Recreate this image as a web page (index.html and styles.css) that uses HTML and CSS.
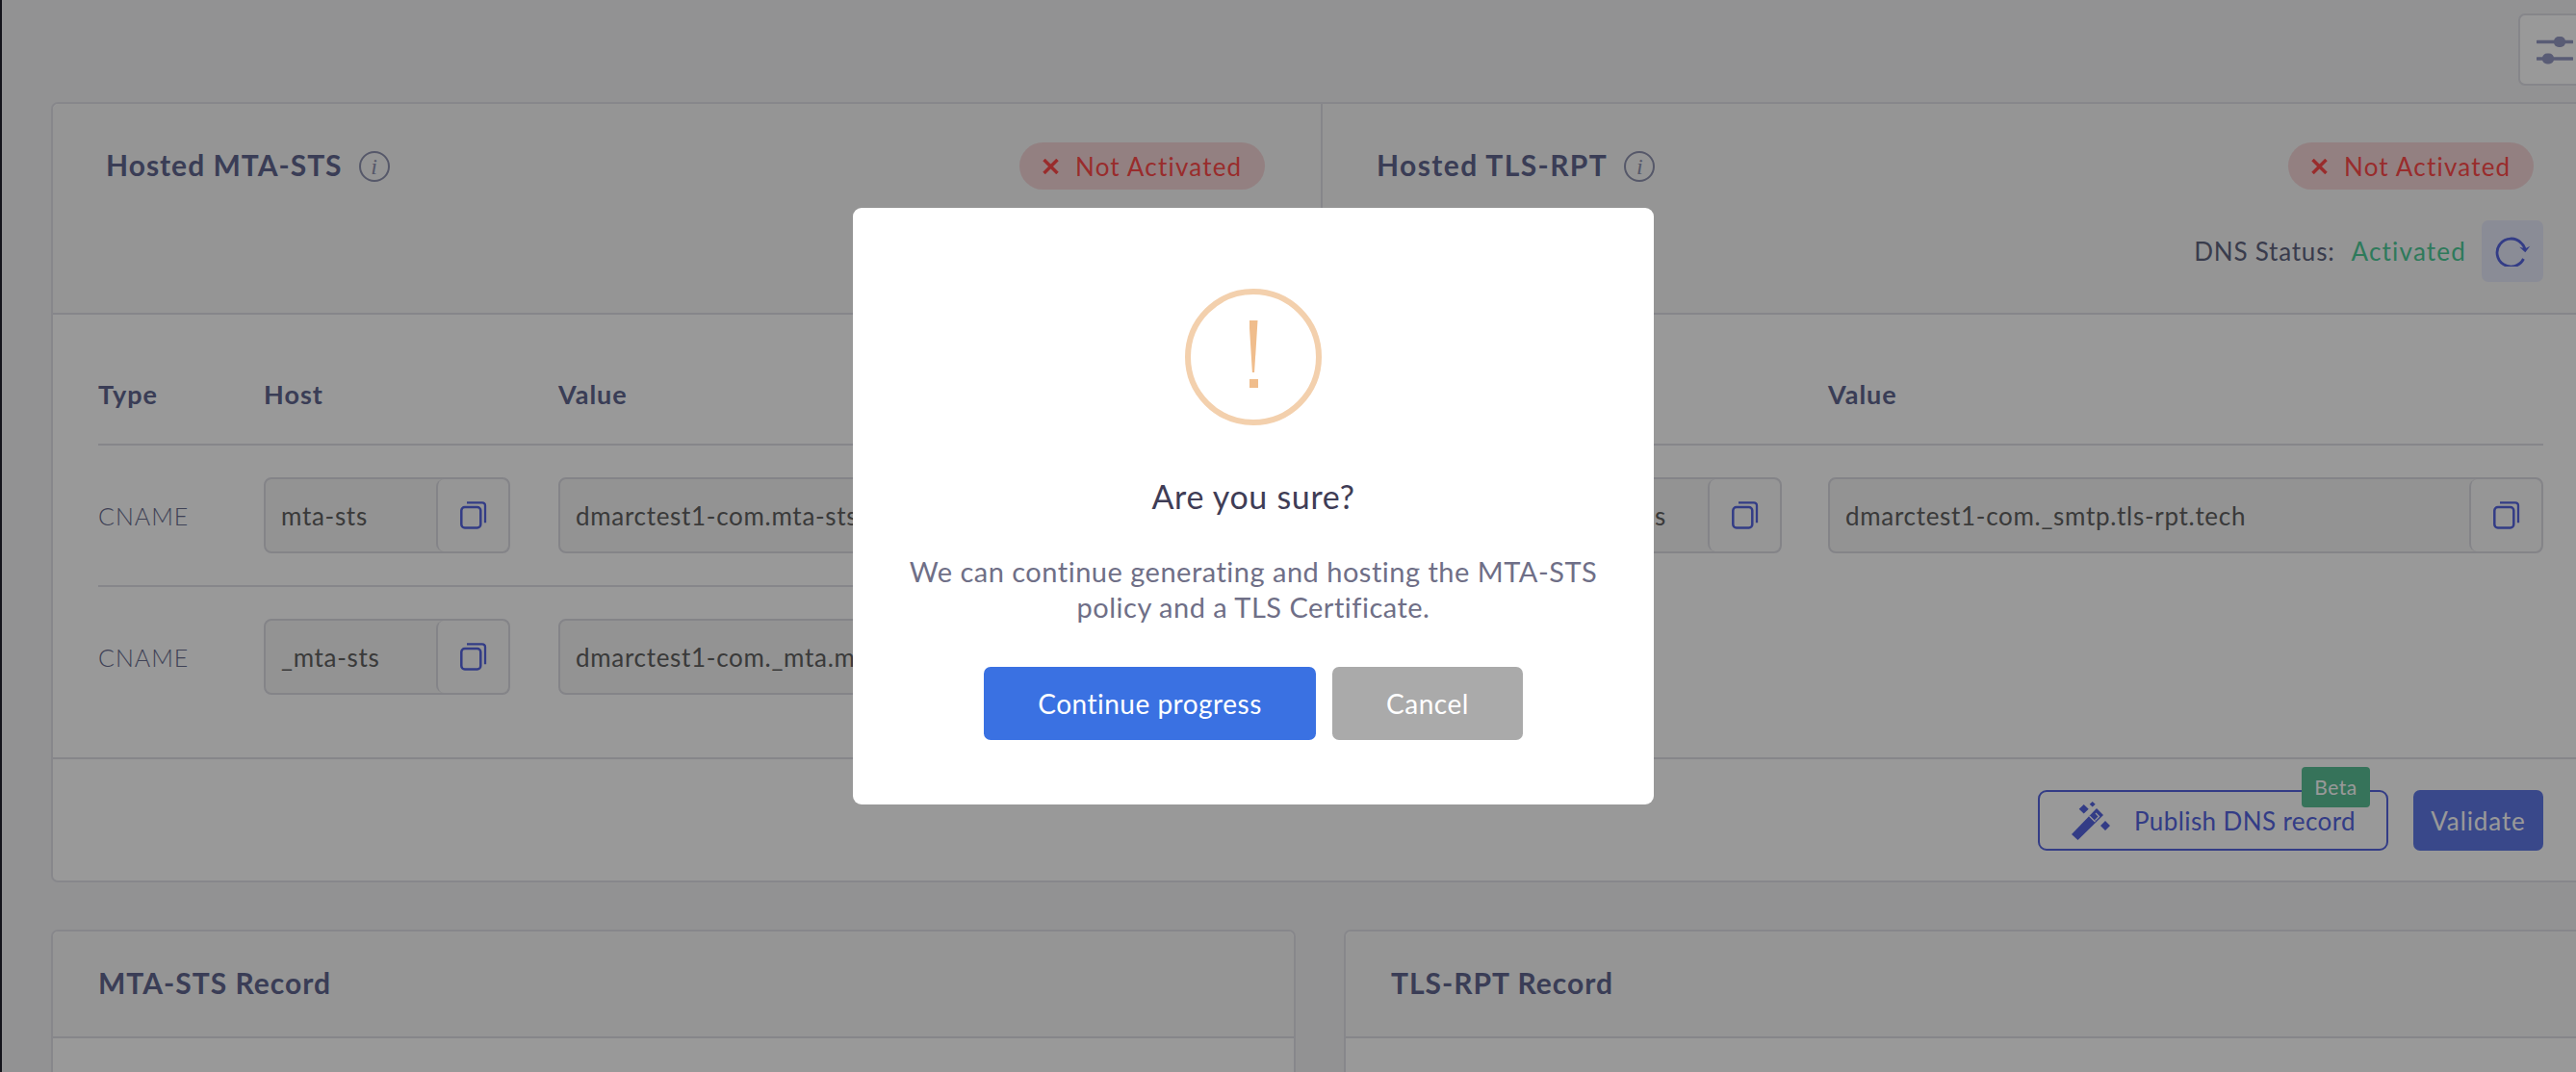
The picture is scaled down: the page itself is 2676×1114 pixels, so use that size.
FILE: index.html
```html
<!DOCTYPE html>
<html lang="en">
<head>
<meta charset="UTF-8" />
<title>Hosted MTA-STS</title>
<link rel="stylesheet" href="styles.css">
</head>
<body>
  <div class="layout">
    <div class="sidebar"></div>
    <main class="main">
      <div class="toolbar">
        <button class="filter-btn">
          <svg width="38" height="30" viewBox="0 0 38 30"><path d="M1 6.500h36M1 24h36" stroke="#9599c4" stroke-width="3.500" stroke-linecap="round"/><rect x="18" y="1" width="12" height="11" rx="5" fill="#9599c4"/><rect x="6" y="18.500" width="12" height="11" rx="5" fill="#9599c4"/></svg>
        </button>
      </div>

      <!-- Carte principale -->
      <section class="card">
        <div class="card-head split">
          <div class="head-col">
            <div class="head-row">
              <h2 class="title">Hosted MTA-STS <span class="info">i</span></h2>
              <span class="pill">
                <svg width="17" height="16" viewBox="0 0 17 16"><path d="M1.500 1l14 14M15.500 1l-14 14" stroke="#ff4a4a" stroke-width="3.500"/></svg>
                Not Activated
              </span>
            </div>
            <div class="dns-status">
              <span>DNS Status:</span><span class="ok">Activated</span>
              <button class="refresh"><svg width="38" height="32" viewBox="0 0 38 32"><path d="M30.500 24A14.500 14.500 0 1 1 28 7.500Q31.500 10.500 32 15" fill="none" stroke="#5565e0" stroke-width="2.800"/><path d="M26.300 11.700l6 1.600 5-2.600-5 6.600z" fill="#5565e0"/></svg></button>
            </div>
          </div>
          <div class="head-col">
            <div class="head-row">
              <h2 class="title title-tls">Hosted TLS-RPT <span class="info">i</span></h2>
              <span class="pill">
                <svg width="17" height="16" viewBox="0 0 17 16"><path d="M1.500 1l14 14M15.500 1l-14 14" stroke="#ff4a4a" stroke-width="3.500"/></svg>
                Not Activated
              </span>
            </div>
            <div class="dns-status">
              <span>DNS Status:</span><span class="ok">Activated</span>
              <button class="refresh"><svg width="38" height="32" viewBox="0 0 38 32"><path d="M30.500 24A14.500 14.500 0 1 1 28 7.500Q31.500 10.500 32 15" fill="none" stroke="#5565e0" stroke-width="2.800"/><path d="M26.300 11.700l6 1.600 5-2.600-5 6.600z" fill="#5565e0"/></svg></button>
            </div>
          </div>
        </div>

        <div class="split">
          <div class="dns-col">
            <div class="dns-row dns-labels"><span>Type</span><span>Host</span><span>Value</span></div>
            <div class="dns-row">
              <span class="dns-type">CNAME</span>
              <div class="field"><span class="field-text">mta-sts</span><span class="copy"><svg width="28" height="29" viewBox="0 0 28 29"><rect x="1.300" y="6" width="20" height="21.500" rx="3.500" fill="none" stroke="#5565e0" stroke-width="2.500"/><path d="M7 1.300h16a3 3 0 0 1 3 3v18" fill="none" stroke="#5565e0" stroke-width="2.300"/></svg></span></div>
              <div class="field"><span class="field-text">dmarctest1-com.mta-sts.tls-rpt.tech</span><span class="copy"><svg width="28" height="29" viewBox="0 0 28 29"><rect x="1.300" y="6" width="20" height="21.500" rx="3.500" fill="none" stroke="#5565e0" stroke-width="2.500"/><path d="M7 1.300h16a3 3 0 0 1 3 3v18" fill="none" stroke="#5565e0" stroke-width="2.300"/></svg></span></div>
            </div>
            <div class="dns-row">
              <span class="dns-type">CNAME</span>
              <div class="field"><span class="field-text">_mta-sts</span><span class="copy"><svg width="28" height="29" viewBox="0 0 28 29"><rect x="1.300" y="6" width="20" height="21.500" rx="3.500" fill="none" stroke="#5565e0" stroke-width="2.500"/><path d="M7 1.300h16a3 3 0 0 1 3 3v18" fill="none" stroke="#5565e0" stroke-width="2.300"/></svg></span></div>
              <div class="field"><span class="field-text">dmarctest1-com._mta.mta-sts.tech</span><span class="copy"><svg width="28" height="29" viewBox="0 0 28 29"><rect x="1.300" y="6" width="20" height="21.500" rx="3.500" fill="none" stroke="#5565e0" stroke-width="2.500"/><path d="M7 1.300h16a3 3 0 0 1 3 3v18" fill="none" stroke="#5565e0" stroke-width="2.300"/></svg></span></div>
            </div>
          </div>
          <div class="dns-col">
            <div class="dns-row dns-labels"><span>Type</span><span>Host</span><span>Value</span></div>
            <div class="dns-row">
              <span class="dns-type">CNAME</span>
              <div class="field"><span class="field-text">_smtp._tls</span><span class="copy"><svg width="28" height="29" viewBox="0 0 28 29"><rect x="1.300" y="6" width="20" height="21.500" rx="3.500" fill="none" stroke="#5565e0" stroke-width="2.500"/><path d="M7 1.300h16a3 3 0 0 1 3 3v18" fill="none" stroke="#5565e0" stroke-width="2.300"/></svg></span></div>
              <div class="field"><span class="field-text">dmarctest1-com._smtp.tls-rpt.tech</span><span class="copy"><svg width="28" height="29" viewBox="0 0 28 29"><rect x="1.300" y="6" width="20" height="21.500" rx="3.500" fill="none" stroke="#5565e0" stroke-width="2.500"/><path d="M7 1.300h16a3 3 0 0 1 3 3v18" fill="none" stroke="#5565e0" stroke-width="2.300"/></svg></span></div>
            </div>
          </div>
        </div>

        <div class="card-foot">
          <button class="btn-publish">
            <svg width="40" height="40" viewBox="0 0 40 40"><path d="M0 34l6.500 6L33 14l-7-7z" fill="#5565e0"/><path d="M18.500 15l6 6M25 12l3.500 3.500-4 4" fill="none" stroke="#ffffff" stroke-width="1.300"/><path d="M12.700 3l5 4.700-5 4.700-5-4.700zM21.700 0l3 2.700-3 2.700-3-2.700zM35 20l5 5-5 5-5-5z" fill="#5565e0"/></svg>
            Publish DNS record
            <span class="badge">Beta</span>
          </button>
          <button class="btn-validate">Validate</button>
        </div>
      </section>

      <!-- Enregistrements -->
      <div class="records">
        <section class="card"><div class="record-head"><h2 class="title">MTA-STS Record</h2></div></section>
        <section class="card"><div class="record-head"><h2 class="title">TLS-RPT Record</h2></div></section>
      </div>
    </main>
  </div>

  <div class="overlay"></div>

  <!-- Fenêtre de confirmation -->
  <div class="modal">
    <div class="warn-icon"><span class="warn-bar"></span><span class="warn-dot"></span></div>
    <h3 class="modal-title">Are you sure?</h3>
    <p class="modal-text">We can continue generating and hosting the MTA-STS policy and a TLS Certificate.</p>
    <div class="modal-actions">
      <button class="btn-confirm">Continue progress</button>
      <button class="btn-cancel">Cancel</button>
    </div>
  </div>
</body>
</html>
```

FILE: styles.css
```css
html, body {
  margin: 0;
  height: 100%;
  overflow: hidden;
  font-family: "Lato", "Noto Sans", sans-serif;
  color: #616161;
}
button {
  font-family: inherit;
  cursor: pointer;
}
.layout {
  display: flex;
  width: 2692px;
  height: 1114px;
  overflow: hidden;
  background: #f3f3f6;
}
.sidebar {
  flex: none;
  width: 2px;
  background: #22222e;
}
.main {
  flex: 1;
  padding: 0 0 0 51px;
  min-width: 0;
}
.toolbar {
  display: flex;
  justify-content: flex-end;
  padding: 14px 0 17px;
}
.filter-btn {
  width: 76px;
  height: 75px;
  padding: 0;
  background: #ffffff;
  border: 2px solid #dfdfe6;
  border-radius: 7px;
  display: flex;
  align-items: center;
  justify-content: center;
}
/* Cartes */
.card {
  background: #ffffff;
  border: 2px solid #e2e2e8;
  border-radius: 7px;
}
.split {
  display: grid;
  grid-template-columns: 1317px 1fr;
}
.card-head {
  background: #f8f8f8;
  border-bottom: 2px solid #e0e0e6;
  border-radius: 7px 7px 0 0;
}
.head-col {
  height: 217px;
  box-sizing: border-box;
  padding: 40px 48px 0 55px;
}
.head-col + .head-col {
  border-left: 2px solid #e0e0e6;
  padding-left: 56px;
}
.head-row {
  display: flex;
  justify-content: space-between;
  align-items: center;
  margin-right: 10px;
  height: 49px;
}
.title {
  margin: 0;
  padding-bottom: 3px;
  font-size: 30px;
  font-weight: 700;
  letter-spacing: 1px;
  color: #61678f;
  display: flex;
  align-items: center;
  gap: 17px;
}
.title-tls {
  letter-spacing: 1.4px;
}
.info {
  width: 28px;
  height: 28px;
  margin-top: 3px;
  border: 2px solid #8f93b0;
  border-radius: 50%;
  font-family: "Liberation Serif", serif;
  font-style: italic;
  font-weight: 400;
  font-size: 24px;
  line-height: 28px;
  letter-spacing: 0;
  text-align: center;
  color: #8f93b0;
}
.pill {
  display: flex;
  align-items: center;
  gap: 17px;
  box-sizing: border-box;
  width: 255px;
  height: 49px;
  padding-left: 24px;
  border-radius: 25px;
  background: #f6d6d8;
  color: #ff4a4a;
  font-size: 26px;
  letter-spacing: 1.2px;
}
.dns-status {
  display: flex;
  justify-content: flex-end;
  align-items: center;
  height: 64px;
  margin-top: 32px;
  font-size: 26px;
  letter-spacing: 0.8px;
  color: #60647f;
}
.dns-status .ok {
  margin: 0 16px 0 17px;
  letter-spacing: 1.2px;
  color: #4ecb98;
}
.refresh {
  width: 64px;
  height: 64px;
  padding: 0;
  border: none;
  border-radius: 7px;
  background: #e6e9fb;
  display: flex;
  align-items: center;
  justify-content: center;
}
/* Tableau DNS */
.dns-col {
  padding: 0 49px 0 47px;
  height: 460px;
  box-sizing: border-box;
}
.dns-col + .dns-col {
  padding-left: 49px;
  padding-right: 48px;
}
.dns-row {
  display: grid;
  grid-template-columns: 172px 306px 1fr;
  align-items: center;
  padding: 33px 0;
  border-top: 2px solid #e0e0e6;
}
.dns-row .field:nth-child(2) {
  width: 256px;
}
.dns-col + .dns-col .field:nth-child(2) {
  width: 258px;
}
.dns-labels {
  border-top: none;
  padding: 30px 0 0;
  height: 134px;
  box-sizing: border-box;
  font-size: 27px;
  font-weight: 700;
  letter-spacing: 1px;
  color: #61678f;
}
.dns-type {
  font-size: 25px;
  font-weight: 300;
  letter-spacing: 1px;
  color: #6a6e90;
}
.field {
  display: flex;
  height: 79px;
  box-sizing: border-box;
  background: #f5f5f5;
  border: 2px solid #dcdce3;
  border-radius: 8px;
  overflow: hidden;
}
.field-text {
  flex: 1;
  align-self: center;
  padding-left: 16px;
  font-size: 26px;
  letter-spacing: 0.7px;
  white-space: nowrap;
  overflow: hidden;
}
.copy {
  flex: none;
  width: 73px;
  background: #fbfbfb;
  border-left: 2px solid #dcdce3;
  border-radius: 8px;
  display: flex;
  align-items: center;
  justify-content: center;
}
.card-foot {
  display: flex;
  justify-content: flex-end;
  align-items: flex-start;
  gap: 26px;
  height: 128px;
  box-sizing: border-box;
  padding: 32px 48px 0 0;
  border-top: 2px solid #e0e0e6;
}
.btn-publish {
  position: relative;
  display: flex;
  align-items: center;
  gap: 25px;
  height: 63px;
  padding: 0 32px 0 33px;
  background: transparent;
  border: 2px solid #5565e0;
  border-radius: 9px;
  color: #5565e0;
  font-size: 26px;
  letter-spacing: 0.4px;
}
.badge {
  position: absolute;
  top: -26px;
  right: 17px;
  width: 71px;
  height: 42px;
  line-height: 42px;
  border-radius: 4px;
  background: #5ac096;
  color: #ffffff;
  font-size: 21px;
  letter-spacing: 0.5px;
}
.btn-validate {
  width: 135px;
  height: 63px;
  padding: 0;
  border: none;
  border-radius: 7px;
  background: #5f78e6;
  color: #ffffff;
  font-size: 26px;
  letter-spacing: 0.9px;
}
.records {
  display: grid;
  grid-template-columns: 1293px 1fr;
  gap: 50px;
  margin-top: 49px;
}
.records .card {
  height: 300px;
}
.record-head {
  height: 111px;
  box-sizing: border-box;
  padding-left: 47px;
  display: flex;
  align-items: center;
  background: #f8f8f8;
  border-bottom: 2px solid #e0e0e6;
  border-radius: 7px 7px 0 0;
}
/* Fenêtre modale */
.overlay {
  position: fixed;
  inset: 0;
  background: rgba(0, 0, 0, 0.4);
}
.modal {
  position: fixed;
  left: 886px;
  top: 216px;
  width: 832px;
  height: 620px;
  box-sizing: border-box;
  padding-top: 84px;
  background: #ffffff;
  border-radius: 9px;
  display: flex;
  flex-direction: column;
  align-items: center;
}
.warn-icon {
  width: 142px;
  height: 142px;
  box-sizing: border-box;
  border: 6px solid #f3d0ad;
  border-radius: 50%;
  display: flex;
  flex-direction: column;
  align-items: center;
  padding-top: 27px;
}
.warn-bar {
  width: 9px;
  height: 54px;
  background: #f0bd8c;
  clip-path: polygon(0 0, 100% 0, 62% 100%, 38% 100%);
}
.warn-dot {
  width: 9px;
  height: 9px;
  margin-top: 7px;
  background: #f0bd8c;
}
.modal-title {
  margin: 50px 0 0;
  font-size: 34px;
  line-height: 48px;
  font-weight: 400;
  letter-spacing: 0.7px;
  color: #3f3d56;
}
.modal-text {
  margin: 35px 0 0;
  width: 760px;
  font-size: 29px;
  line-height: 37px;
  letter-spacing: 0.5px;
  text-align: center;
  color: #6f6f87;
}
.modal-actions {
  display: flex;
  gap: 17px;
  margin-top: 44px;
}
.modal-actions button {
  height: 76px;
  padding: 0;
  border: none;
  border-radius: 7px;
  color: #ffffff;
  font-size: 28px;
  letter-spacing: 0.5px;
}
.btn-confirm {
  width: 345px;
  background: #3a71e2;
}
.btn-cancel {
  width: 198px;
  background: #aaaaaa;
}
```
